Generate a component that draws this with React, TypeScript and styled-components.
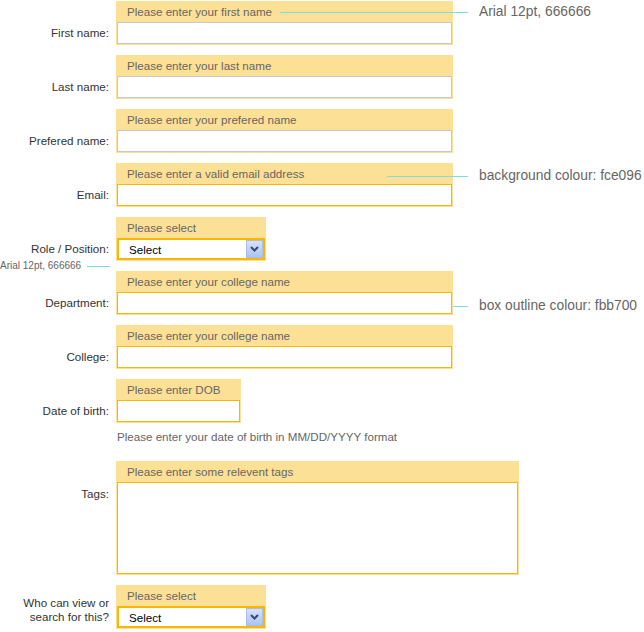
import React from "react";
import styled, { createGlobalStyle } from "styled-components";

const Global = createGlobalStyle`
  html, body { margin: 0; padding: 0; background: #fff; }
  body { font-family: "Liberation Sans", Arial, sans-serif; }
`;

const Page = styled.div`
  position: relative;
  width: 644px;
  height: 632px;
  padding-top: 1px;
  box-sizing: border-box;
  overflow: hidden;
`;

const Row = styled.div<{ $gap?: number }>`
  display: grid;
  grid-template-columns: 116px auto;
  align-items: end;
  margin-bottom: ${(p) => (p.$gap ?? 10)}px;
`;

const Label = styled.div<{ $top?: number }>`
  text-align: right;
  padding-right: 7px;
  padding-bottom: 5px;
  font-size: 11.6px;
  line-height: 14px;
  color: #333;
  ${(p) => (p.$top !== undefined ? `align-self: start; padding-top: ${p.$top}px;` : "")}
`;

const Block = styled.div<{ $w: number }>`
  width: ${(p) => p.$w}px;
  box-sizing: border-box;
  background: #fce096;
  padding: 1px;
`;

const Caption = styled.div`
  height: 20px;
  line-height: 20px;
  padding-left: 10px;
  font-size: 11.6px;
  color: #666;
`;

const TextInput = styled.div<{ $orange?: boolean; $h?: number }>`
  height: ${(p) => p.$h ?? 22}px;
  box-sizing: border-box;
  background: #fff;
  border: 1px solid ${(p) => (p.$orange ? "#fbb700" : "#c8c8c8")};
`;

const SelectBox = styled.div`
  height: 22px;
  box-sizing: border-box;
  background: #fff;
  border: 1px solid #fbb700;
  box-shadow: inset 0 0 0 1px #fbb700;
  display: flex;
  align-items: center;
  justify-content: space-between;
  padding: 0 1px 0 11px;
  font-size: 11.6px;
  color: #000;
`;

const ArrowBtn = styled.div`
  width: 17px;
  height: 18px;
  box-sizing: border-box;
  border: 1px solid #a9bde9;
  background: linear-gradient(#d6e2fb, #aec3f1);
  display: flex;
  align-items: center;
  justify-content: center;
`;

const Hint = styled.div`
  margin: 7px 0 17px 117px;
  font-size: 11.6px;
  line-height: 14px;
  color: #666;
`;

const Note = styled.div<{ $x: number; $y: number; $small?: boolean }>`
  position: absolute;
  left: ${(p) => p.$x}px;
  top: ${(p) => p.$y}px;
  font-size: ${(p) => (p.$small ? 10 : 13.8)}px;
  line-height: 14px;
  color: #666;
  white-space: nowrap;
`;

const Leader = styled.div<{ $x1: number; $x2: number; $y: number }>`
  position: absolute;
  left: ${(p) => p.$x1}px;
  width: ${(p) => p.$x2 - p.$x1}px;
  top: ${(p) => p.$y}px;
  height: 1px;
  background: #7fdde9;
`;

const Chevron = () => (
  <svg width="9" height="6" viewBox="0 0 9 6">
    <path d="M1 1 L4.5 4.5 L8 1" fill="none" stroke="#3c4a66" strokeWidth="2" />
  </svg>
);

type FieldProps = { label: React.ReactNode; caption: string; w?: number; orange?: boolean };

const TextField = ({ label, caption, w = 337, orange }: FieldProps) => (
  <Row>
    <Label>{label}</Label>
    <Block $w={w}>
      <Caption>{caption}</Caption>
      <TextInput $orange={orange} />
    </Block>
  </Row>
);

const SelectField = ({ label, gap }: { label: React.ReactNode; gap?: number }) => (
  <Row $gap={gap}>
    <Label>{label}</Label>
    <Block $w={150}>
      <Caption>Please select</Caption>
      <SelectBox>
        <span>Select</span>
        <ArrowBtn>
          <Chevron />
        </ArrowBtn>
      </SelectBox>
    </Block>
  </Row>
);

export default function App() {
  return (
    <Page>
      <Global />
      <TextField label="First name:" caption="Please enter your first name" />
      <TextField label="Last name:" caption="Please enter your last name" />
      <TextField label="Prefered name:" caption="Please enter your prefered name" />
      <TextField label="Email:" caption="Please enter a valid email address" orange />
      <SelectField label="Role / Position:" />
      <TextField label="Department:" caption="Please enter your college name" orange />
      <TextField label="College:" caption="Please enter your college name" orange />
      <Row $gap={0}>
        <Label>Date of birth:</Label>
        <Block $w={125}>
          <Caption>Please enter DOB</Caption>
          <TextInput $orange />
        </Block>
      </Row>
      <Hint>Please enter your date of birth in MM/DD/YYYY format</Hint>
      <Row>
        <Label $top={26}>Tags:</Label>
        <Block $w={403}>
          <Caption>Please enter some relevent tags</Caption>
          <TextInput $orange $h={92} />
        </Block>
      </Row>
      <SelectField
        gap={0}
        label={
          <>
            Who can view or
            <br />
            search for this?
          </>
        }
      />

      <Leader $x1={280} $x2={468} $y={12} />
      <Note $x={479} $y={5}>Arial 12pt, 666666</Note>
      <Leader $x1={387} $x2={468} $y={176} />
      <Note $x={479} $y={169}>background colour: fce096</Note>
      <Leader $x1={453} $x2={468} $y={306} />
      <Note $x={479} $y={299}>box outline colour: fbb700</Note>
      <Leader $x1={87} $x2={110} $y={266} />
      <Note $x={0} $y={259} $small>Arial 12pt, 666666</Note>
    </Page>
  );
}
